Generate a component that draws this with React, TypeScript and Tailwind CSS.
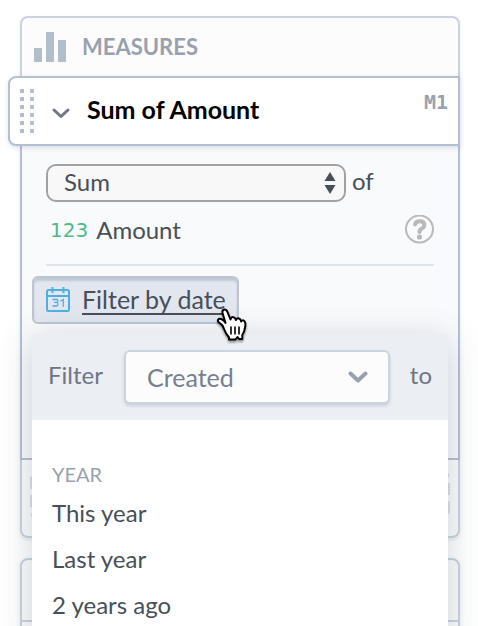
import React from "react";

function BarsIcon() {
  return (
    <svg width="32" height="32" viewBox="0 0 32 32" fill="#b2beca" aria-hidden="true">
      <rect x="0" y="17" width="8" height="14" />
      <rect x="12" y="1" width="8" height="30" />
      <rect x="24" y="9" width="8" height="22" />
    </svg>
  );
}

function DragHandle() {
  return (
    <span className="grid grid-cols-2 gap-x-1.5 gap-y-1" aria-hidden="true">
      {Array.from({ length: 12 }, (_, i) => (
        <span key={i} className="size-1 bg-[#b2beca]" />
      ))}
    </span>
  );
}

function CollapseChevron() {
  return (
    <svg className="text-[#6e7683]" width="20" height="12" viewBox="0 0 20 12" fill="none" stroke="currentColor" strokeWidth="3" strokeLinecap="round" strokeLinejoin="round" aria-hidden="true">
      <path d="M3 3 10 9.500 17 3" />
    </svg>
  );
}

function SelectChevron() {
  return (
    <svg className="pointer-events-none absolute top-[21px] right-[22px] text-[#98a2ae]" width="20" height="12" viewBox="0 0 20 12" fill="none" stroke="currentColor" strokeWidth="4" strokeLinecap="round" strokeLinejoin="round" aria-hidden="true">
      <path d="M2.500 2.500 10 9.500 17.500 2.500" />
    </svg>
  );
}

function CalendarIcon() {
  return (
    <svg width="26" height="26" viewBox="0 0 26 26" fill="none" stroke="#4fb0de" strokeWidth="2" aria-hidden="true">
      <rect x="2" y="3" width="22" height="21" rx="1.500" />
      <path d="M2 9h22M7.500 0v6M18.500 0v6" />
      <path strokeWidth="1.300" d="M7.500 12.500h4.300q1 0 1 1v.8q0 1-1 1H9M11.800 15.300q1 0 1 1v1.700q0 1-1 1H7.500M15.500 14.300l2.800-1.800v7.200" />
    </svg>
  );
}

function HandCursor() {
  return (
    <svg className="drop-shadow-[0_2px_1px_rgba(0,0,0,0.4)]" width="32" height="34" viewBox="0 0 32 34" aria-hidden="true">
      <path
        d="M8 21 6.500 17.500 2.500 14Q1 12 3 10.800Q5 10.200 7.500 12.500L9.500 15 6.500 5Q6 2 8.200 1.500Q10.400 1.200 11.500 4L14.500 11.500Q15 8.500 17.500 9.200Q19.500 9.700 20 12Q21 9.800 23 10.500Q24.800 11 25.200 13.500Q26.500 11.500 28.300 13Q29.800 14 29.300 18L28.200 23Q27.500 25 26.300 27V31H23L21.500 29 19.500 31.500H13V29.500Q10 26 8 21Z"
        fill="#fff" stroke="#000" strokeWidth="2" strokeLinejoin="round"
      />
      <path d="M15 18.500v8M19 18.500v8M23 18.500v8" stroke="#000" strokeWidth="1.600" />
    </svg>
  );
}

const years = ["This year", "Last year", "2 years ago"];

function DatePopover() {
  return (
    <div className="absolute inset-x-0 top-full z-10 mt-2.5 bg-white shadow-[0_6px_32px_rgba(60,80,105,0.24)]">
      <div className="flex items-center bg-[#ebeef3] px-4 py-4 text-[#6e7683]">
        <label htmlFor="date-field" className="w-[76px] pb-1">Filter</label>
        <div className="relative flex-1">
          <select id="date-field" className="block h-[54px] w-full appearance-none rounded-md border-2 border-[#cbd5df] bg-[#fcfcfc] px-[21px] text-[25px] text-[#76808e] shadow-[0_2px_3px_rgba(100,120,145,0.25)]">
            <option>Created</option>
          </select>
          <SelectChevron />
        </div>
        <span className="ml-5 pb-1">to</span>
      </div>
      <div className="px-5 pt-[38px] pb-5">
        <h3 className="text-xl leading-8 text-[#98a2ae]">YEAR</h3>
        <ul>
          {years.map((year) => (
            <li key={year}>
              <button className="block h-[46px] w-full text-left text-[#474f59]">{year}</button>
            </li>
          ))}
        </ul>
      </div>
    </div>
  );
}

export default function App() {
  return (
    <main className="h-screen overflow-hidden bg-white pt-4 pr-[18px] pl-5 font-['Lato',sans-serif] text-2xl leading-8 text-[#474f59]">
      <section className="rounded-lg shadow-[0_2px_4px_rgba(100,120,145,0.15)]">
        <header className="flex h-[60px] items-center gap-4 rounded-t-lg border-x-2 border-t-2 border-[#c8d3df] bg-[#fcfcfc] px-3">
          <BarsIcon />
          <h2 className="text-[22px] font-bold text-[#98a2ae]">MEASURES</h2>
        </header>

        <div className="relative -ml-3 flex h-[70px] items-center rounded-l-lg border-2 border-[#b2c0d2] bg-white pr-2.5 pl-2.5 shadow-[0_2px_5px_rgba(100,120,145,0.2)]">
          <DragHandle />
          <button aria-label="Collapse" className="ml-[17px] pt-1">
            <CollapseChevron />
          </button>
          <h3 className="ml-4 flex-1 pb-1 text-[25px] font-bold text-black">Sum of Amount</h3>
          <span className="self-start pt-2 font-['DejaVu_Sans_Mono',monospace] text-xl leading-8 font-bold text-[#98a2ae]">M1</span>
        </div>

        <div className="border-x-2 border-b-2 border-[#b2c0d2] bg-[#f9fafc] px-2.5 pt-[18px] pb-[134px]">
          <div className="mx-3.5 border-b-2 border-[#dde4ec] pb-[18px]">
            <div className="flex items-center gap-1.5">
              <div className="relative w-[300px]">
                <select aria-label="Aggregation" className="block h-[38px] w-full appearance-none rounded-[10px] border-2 border-[#a2a2a2] bg-[#f8f8f8] px-4 pb-1 text-[#474f59]">
                  <option>Sum</option>
                </select>
                <svg className="pointer-events-none absolute top-2 right-2.5" width="12" height="22" viewBox="0 0 12 22" fill="#474f59" aria-hidden="true">
                  <path d="M6 0l5.500 9H.5zM6 22l5.500-9H.5z" />
                </svg>
              </div>
              <span className="pb-1">of</span>
            </div>
            <div className="mt-3 flex h-8 items-center">
              <span className="ml-1 font-['DejaVu_Sans',sans-serif] text-xl text-[#4fb98a]">123</span>
              <span className="ml-2 flex-1">Amount</span>
              <button aria-label="Help">
                <svg width="30" height="30" viewBox="0 0 30 30" fill="none" stroke="#b9b9b9" aria-hidden="true">
                  <circle cx="15.500" cy="14" r="13.500" strokeWidth="2" />
                  <path d="M11 9.500Q11.500 6.200 15.700 6.200Q20.300 6.200 20.300 10Q20.300 12.200 17.800 13.500Q15.500 14.700 15.500 17" strokeWidth="4" strokeLinecap="round" />
                  <circle cx="15.500" cy="22" r="2.600" fill="#b9b9b9" stroke="none" />
                </svg>
              </button>
            </div>
          </div>

          <div className="relative mt-2.5">
            <button className="flex h-12 items-center gap-[11px] rounded-md border-2 border-[#bcc6d3] bg-[#e2e7ef] px-[11px] shadow-[inset_0_3px_2px_rgba(150,165,185,0.45)]">
              <CalendarIcon />
              <span className="pb-0.5 text-[25px] underline decoration-2 underline-offset-4">Filter by date</span>
            </button>
            <div className="pointer-events-none absolute top-8 left-[184px] z-20">
              <HandCursor />
            </div>
            <DatePopover />
          </div>
        </div>

        <div className="h-[78px] rounded-b-lg border-x-2 border-b-2 border-[#c8d3df] bg-[#fcfcfc] px-2 pt-2.5 pb-4">
          <div className="h-full rounded-lg border-[6px] border-dashed border-[#dbe0e5]" />
        </div>
      </section>

      <section className="mt-5 rounded-lg border-2 border-[#c8d3df] bg-[#fcfcfc] shadow-[0_2px_4px_rgba(100,120,145,0.15)]">
        <div className="h-[62px] border-b-2 border-[#c8d3df]" />
        <div className="h-20" />
      </section>
    </main>
  );
}
